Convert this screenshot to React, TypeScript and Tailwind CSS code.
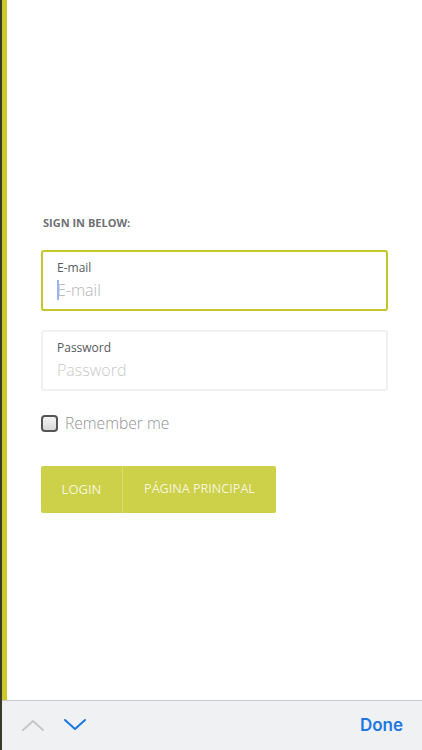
import React from "react";

export default function App() {
  const font = { fontFamily: '"Open Sans", "Liberation Sans", sans-serif' };
  return (
    <div className="flex h-[750px] w-[422px] overflow-hidden bg-white" style={font}>
      <div className="w-[2px] h-full bg-[#3a3a2a]" />
      <div className="flex flex-col flex-1">
        <div className="flex h-[700px]">
          <div className="w-[5px] h-full bg-[#c9c92c]" />
          <div className="flex-1 flex flex-col px-[34px] pt-[215px]">
            <div className="text-[11px] leading-[15px] font-bold text-[#6e7175] pl-[2px]">
              SIGN IN BELOW:
            </div>
            <div className="mt-[20px] h-[61px] border-2 border-[#c4c62c] rounded-[3px] flex flex-col px-[14px] pt-[8px]">
              <div className="text-[12px] leading-[16px] text-[#555a5e]">E-mail</div>
              <div className="mt-[3px] flex items-center h-[22px] relative">
                <div className="absolute left-0 top-[1px] w-[1.5px] h-[20px] bg-[#9db5ec]" />
                <span className="text-[16px] leading-[22px] font-light text-[#b3b5b8]">E-mail</span>
              </div>
            </div>
            <div className="mt-[19px] h-[61px] border-2 border-[#f0f0f0] rounded-[3px] flex flex-col px-[14px] pt-[8px]">
              <div className="text-[12px] leading-[16px] text-[#555a5e]">Password</div>
              <div className="mt-[3px] text-[16px] leading-[22px] font-light text-[#c8cacc]">Password</div>
            </div>
            <div className="mt-[21px] flex items-center h-[22px]">
              <div className="w-[17px] h-[17px] rounded-[4px] border-2 border-[#555555] bg-gradient-to-b from-[#f4f4f4] to-[#d8d8d8]" />
              <span className="ml-[7px] text-[15.6px] leading-[22px] font-light text-[#8e9195]">Remember me</span>
            </div>
            <div className="mt-[32px] flex">
              <button className="w-[82px] h-[47px] bg-[#cdd049] rounded-l-[2px] text-[13px] text-[#f4f5dc] border-r border-[#d9db78]">
                LOGIN
              </button>
              <button className="w-[153px] h-[47px] bg-[#cdd049] rounded-r-[2px] text-[12.6px] text-[#f4f5dc]">
                PÁGINA PRINCIPAL
              </button>
            </div>
          </div>
        </div>
        <div className="h-[50px] bg-[#f0f1f3] border-t border-[#c9cacd] flex items-center pl-[18px] pr-[19px]">
          <svg width="26" height="16" viewBox="0 0 26 16" className="mt-[-2px]">
            <path d="M3 13 L13 4 L23 13" fill="none" stroke="#c6c7c9" strokeWidth="2" strokeLinecap="round" strokeLinejoin="round" />
          </svg>
          <svg width="26" height="16" viewBox="0 0 26 16" className="ml-[16px] mt-[-2px]">
            <path d="M3 3 L13 12 L23 3" fill="none" stroke="#1a76e3" strokeWidth="2" strokeLinecap="round" strokeLinejoin="round" />
          </svg>
          <div className="flex-1" />
          <span className="text-[17px] font-semibold text-[#1b78e2]" style={{ fontFamily: '"Inter", "Liberation Sans", sans-serif' }}>
            Done
          </span>
        </div>
      </div>
    </div>
  );
}
